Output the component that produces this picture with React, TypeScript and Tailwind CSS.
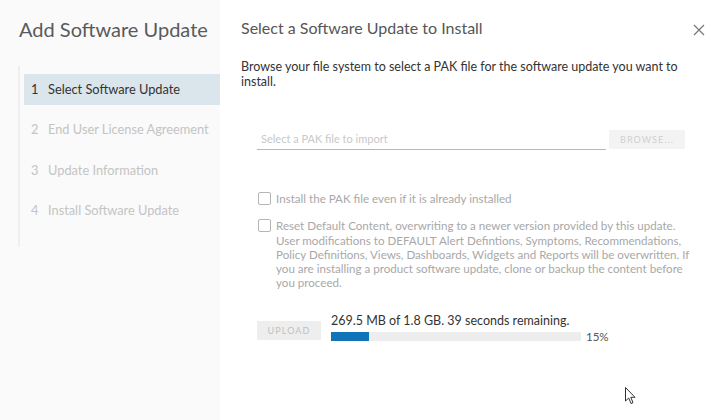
import React from "react";

const font = { fontFamily: "Lato, 'Open Sans', sans-serif" };

function Step({ n, label, active }: { n: number; label: string; active?: boolean }) {
  return (
    <div
      className={`flex items-center h-[31px] pl-[7px] text-[12.8px] ${
        active ? "bg-[#dbe5ec] text-[#333]" : "text-[#c4c4c4]"
      }`}
    >
      <span className="w-[17px]">{n}</span>
      <span>{label}</span>
    </div>
  );
}

export default function App() {
  return (
    <div className="w-[720px] h-[420px] flex bg-white relative overflow-hidden" style={font}>
      <div className="w-[220px] bg-[#fafafa] flex flex-col shrink-0">
        <div className="pl-[19px] pt-[15px] text-[20px] text-[#5a5a5a] leading-[28px]">Add Software Update</div>
        <div className="mt-[23px] ml-[18px] border-l-[2px] border-[#efefef] pt-[8px] pb-[20px] flex flex-col gap-[9.5px]">
          <div className="pl-[4px]"><Step n={1} label="Select Software Update" active /></div>
          <div className="pl-[4px]"><Step n={2} label="End User License Agreement" /></div>
          <div className="pl-[4px]"><Step n={3} label="Update Information" /></div>
          <div className="pl-[4px]"><Step n={4} label="Install Software Update" /></div>
        </div>
      </div>
      <div className="flex-1 pl-[21px] pr-[14px] pt-[17px] flex flex-col">
        <div className="flex items-start justify-between">
          <div className="text-[16px] text-[#565656] leading-[22px]">Select a Software Update to Install</div>
          <svg width="12" height="12" viewBox="0 0 12 12" className="mt-[7px] mr-[1px]">
            <path d="M1 1 L11 11 M11 1 L1 11" stroke="#777" strokeWidth="1.2" />
          </svg>
        </div>
        <p className="mt-[21px] text-[12.5px] leading-[14.5px] text-[#333] w-[460px]">
          Browse your file system to select a PAK file for the software update you want to install.
        </p>
        <div className="mt-[41px] ml-[16px] flex items-end gap-[3px]">
          <div className="w-[349px] border-b border-[#b8b8b8] h-[20px] text-[11px] text-[#c8c8c8] pl-[4px] leading-[18px]">
            Select a PAK file to import
          </div>
          <div className="w-[76px] h-[19px] bg-[#f3f3f3] text-[#d0d0d0] text-[9px] tracking-[0.12em] flex items-center justify-center mb-[1px]">
            BROWSE...
          </div>
        </div>
        <div className="mt-[42px] ml-[17px] flex flex-col gap-[13px] text-[11.6px] text-[#a8a8a8] leading-[14.3px]">
          <div className="flex gap-[5px] items-start">
            <div className="w-[13px] h-[13px] border border-[#b5b5b5] rounded-[2px] shrink-0" />
            <span>Install the PAK file even if it is already installed</span>
          </div>
          <div className="flex gap-[5px] items-start">
            <div className="w-[13px] h-[13px] border border-[#b5b5b5] rounded-[2px] shrink-0" />
            <span className="w-[415px]">
              Reset Default Content, overwriting to a newer version provided by this update. User modifications to DEFAULT Alert Defintions, Symptoms, Recommendations, Policy Definitions, Views, Dashboards, Widgets and Reports will be overwritten. If you are installing a product software update, clone or backup the content before you proceed.
            </span>
          </div>
        </div>
        <div className="mt-[23px] ml-[16px] flex items-start gap-[10px]">
          <div className="mt-[7px] w-[64px] h-[19px] bg-[#eeeeee] text-[#c0c0c0] text-[9px] tracking-[0.12em] flex items-center justify-center">
            UPLOAD
          </div>
          <div className="flex flex-col">
            <div className="text-[12.5px] text-[#333] leading-[14px]">269.5 MB of 1.8 GB. 39 seconds remaining.</div>
            <div className="flex items-center gap-[5px] mt-[3px]">
              <div className="w-[250px] h-[9px] bg-[#ededed]">
                <div className="h-full bg-[#0f75b8]" style={{ width: "15%" }} />
              </div>
              <span className="text-[11.5px] text-[#555] leading-none">15%</span>
            </div>
          </div>
        </div>
      </div>
      <svg className="absolute left-[625px] top-[387px]" width="12" height="18" viewBox="0 0 12 18">
        <path d="M0.5 0.5 L0.5 14 L3.7 11 L6 16.5 L8 15.7 L5.8 10.3 L10 10.3 Z" fill="#fff" stroke="#333" strokeWidth="1" />
      </svg>
    </div>
  );
}
